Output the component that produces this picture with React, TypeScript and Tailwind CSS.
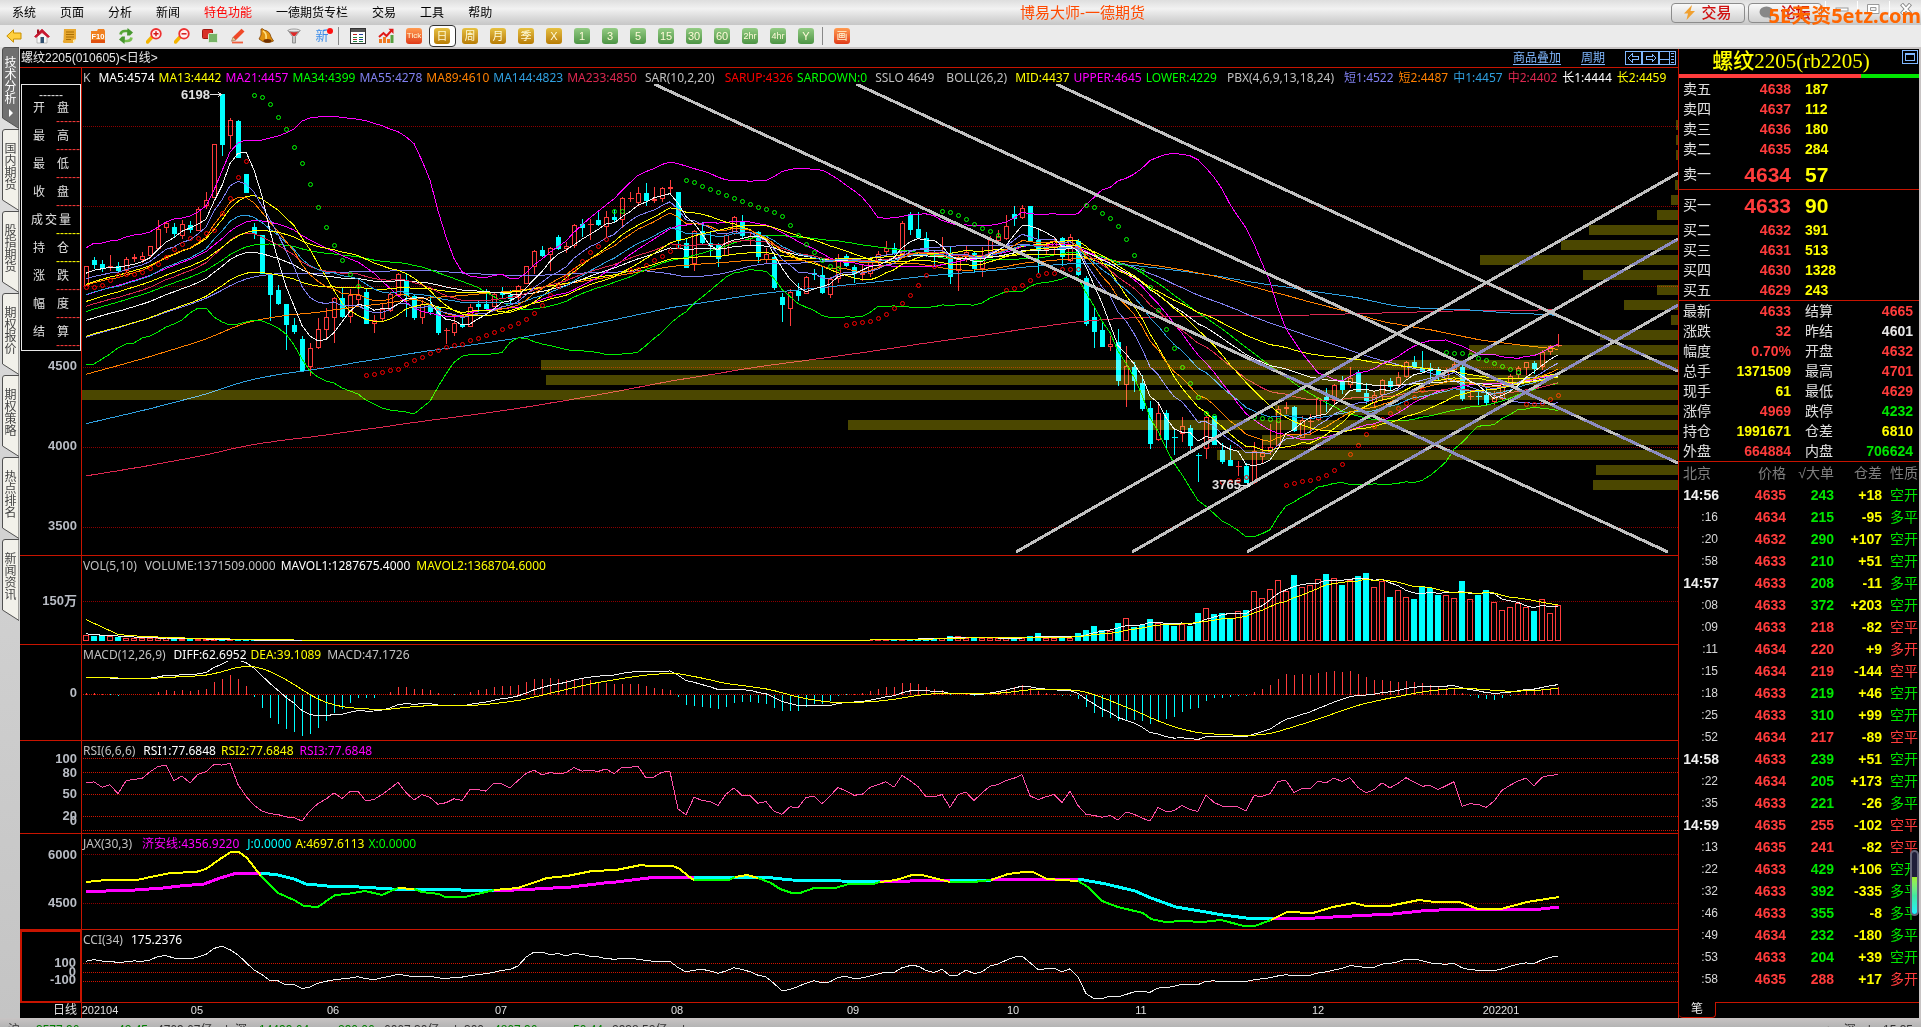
import type { ReactNode } from "react";

/* ------------------------------------------------------------------ */
/* Price data: colour, body top, body bottom, high, low (plot units)   */
/* ------------------------------------------------------------------ */

const CANDLE_TEXT = `r 266 286 266 286,c 260 265 257 269,c 264 268 260 272,r 266 268 255 271,c 266 271 262 273,r 259 271 257 273,r 257 259 254 262,r 256 260 252 263,r 246 256 246 258,r 229 249 220 250,
r 223 228 221 233,c 227 234 223 237,r 224 236 220 239,c 225 230 221 233,r 209 231 207 231,r 200 206 192 209,r 144 198 144 198,c 94 145 94 156,r 120 136 118 149,c 121 158 120 158,
c 174 193 174 193,c 227 234 223 239,c 235 274 235 274,c 274 295 274 321,c 290 304 285 305,c 304 325 304 350,c 325 332 318 334,c 339 371 336 372,r 348 367 343 376,r 329 348 318 349,
r 317 330 308 340,r 298 318 297 343,c 298 317 288 318,r 295 317 289 323,r 295 300 280 306,c 292 324 288 324,r 320 324 315 333,r 309 319 303 321,r 294 311 292 312,r 274 296 273 297,
c 280 296 273 317,c 296 318 294 320,r 304 318 300 324,c 305 312 295 315,c 307 333 306 335,r 330 331 328 344,r 323 333 317 336,c 325 327 317 328,r 307 327 304 327,c 304 307 301 312,
c 304 309 289 309,r 294 307 292 307,c 293 295 287 299,c 295 299 290 303,r 286 298 285 304,r 266 284 266 284,r 251 267 250 274,c 250 256 246 257,r 248 255 247 271,c 237 249 235 250,
r 246 249 242 253,r 225 246 224 248,c 224 228 219 237,r 224 225 219 240,c 220 225 212 226,r 217 227 211 237,c 217 220 210 223,r 198 220 197 228,r 198 199 192 202,r 193 203 187 204,
c 193 201 183 206,r 199 201 187 203,r 188 199 187 202,r 187 189 180 193,c 192 241 192 249,c 243 268 238 268,r 231 264 230 271,c 231 243 222 244,c 243 246 232 256,c 245 259 243 267,
r 235 256 233 256,r 217 234 216 235,c 221 236 215 238,r 236 239 232 246,c 232 257 231 263,r 254 260 248 263,c 257 288 255 290,c 297 305 293 322,r 292 309 289 326,c 291 296 283 301,
r 277 294 276 294,c 273 275 269 280,c 275 293 267 294,r 279 295 277 298,r 259 279 254 283,c 256 266 254 267,c 267 274 265 283,r 273 275 265 281,r 260 274 258 277,r 254 262 251 266,
r 248 252 241 255,c 248 254 243 255,r 223 254 221 255,c 214 230 212 235,c 229 238 212 239,c 238 255 232 257,c 252 255 250 266,r 252 253 237 258,c 253 277 247 284,r 257 271 255 291,
r 252 257 246 262,c 253 269 252 272,r 255 269 247 277,r 240 253 236 254,r 236 241 230 246,r 226 239 215 240,c 214 219 206 226,r 208 218 205 219,c 206 241 206 241,c 240 250 228 273,
r 245 250 242 255,r 241 247 237 254,c 238 257 237 266,r 237 261 234 262,c 241 275 239 276,c 278 324 276 326,c 317 332 307 348,c 330 347 322 347,r 344 347 336 351,c 342 381 329 386,
r 366 385 346 407,c 367 381 362 392,c 383 409 375 411,c 408 444 401 449,r 413 440 402 441,c 413 440 410 450,c 437 438 429 455,r 426 434 417 442,c 428 446 425 452,c 455 456 453 482,
r 417 449 416 459,c 416 445 416 445,c 450 462 443 464,c 460 466 445 466,r 466 467 461 476,c 466 483 463 483,r 451 483 442 484,r 453 457 440 464,r 447 452 424 455,r 409 446 406 446,
r 407 409 402 414,c 407 431 406 432,r 420 438 416 438,r 421 422 414 435,r 398 420 397 421,c 397 401 388 412,r 385 401 384 404,c 382 390 376 394,r 378 385 367 388,c 372 392 370 392,
c 393 401 383 404,r 395 403 392 407,r 380 395 379 401,c 381 387 378 390,r 377 385 372 388,r 362 377 361 378,c 362 367 356 368,c 368 372 351 373,c 368 371 363 383,c 369 375 367 380,
r 370 379 368 383,r 364 370 362 372,c 367 399 363 401,r 396 397 390 400,c 396 397 392 405,c 395 403 387 405,r 397 402 391 405,r 384 399 383 400,r 376 384 374 386,r 368 375 366 378,
r 362 368 362 375,c 363 369 361 374,r 352 367 350 370,r 346 352 345 355,r 345 346 334 347`;

type Candle = { up: boolean; top: number; bottom: number; high: number; low: number };

const candles: Candle[] = CANDLE_TEXT.split(",").map((entry) => {
  const [kind, top, bottom, high, low] = entry.trim().split(" ");
  return { up: kind === "r", top: +top, bottom: +bottom, high: +high, low: +low };
});

const HISTORY = 240;
const priorCloses = Array.from({ length: HISTORY }, (_, j) => {
  const k = HISTORY - j;
  return 268 + 2.8 * k - 0.0065 * k * k;
});
const closes = [...priorCloses, ...candles.map((c) => (c.up ? c.top : c.bottom))];
const typical = [
  ...priorCloses,
  ...candles.map((c) => ((c.up ? c.top : c.bottom) + c.high + c.low) / 3),
];

const visible = (series: number[]) => series.slice(HISTORY);
const xAt = (i: number) => 86 + 8 * i;
const toPoints = (ys: number[]) => ys.map((y, i) => `${xAt(i)},${Math.round(y * 10) / 10}`).join(" ");

function sma(data: number[], n: number) {
  return data.map((_, i) => {
    const from = Math.max(0, i - n + 1);
    let sum = 0;
    for (let j = from; j <= i; j++) sum += data[j];
    return sum / (i - from + 1);
  });
}

function ema(data: number[], n: number) {
  let last = data[0];
  return data.map((v) => (last = last + (2 / (n + 1)) * (v - last)));
}

function pbx(n: number) {
  const a = ema(closes, n);
  const b = sma(closes, 2 * n);
  const c = sma(closes, 4 * n);
  return a.map((v, i) => (v + b[i] + c[i]) / 3);
}

const MID = sma(closes, 26);
const deviation = closes.map((_, i) => {
  const from = Math.max(0, i - 25);
  const part = closes.slice(from, i + 1);
  return Math.sqrt(part.reduce((s, v) => s + (v - MID[i]) ** 2, 0) / part.length);
});
const UPPER_START = [
  248, 243, 243, 241, 240, 237, 235, 234, 232, 227, 222, 219, 218, 216, 212, 206, 190, 171, 152, 143, 140, 140, 140,
  138, 136, 133, 129, 121, 118, 117, 116, 116,
];
const LOWER_START = [
  364, 364, 359, 354, 348, 344, 343, 338, 336, 332, 327, 324, 320, 313, 308, 308, 317, 322, 325, 324, 322, 320, 321,
  324, 328, 334, 345, 359, 371, 377, 381, 383, 388, 391, 394, 400, 404, 408, 410, 411, 412, 414,
];
const upperBand = visible(MID.map((m, i) => m - 2 * deviation[i])).map((v, i) => UPPER_START[i] ?? v);
const lowerBand = visible(MID.map((m, i) => m + 2 * deviation[i])).map((v, i) => LOWER_START[i] ?? v);

const WHITE = "#f0f0f0";
const YELLOW = "#ffff00";
const MAGENTA = "#ff00ff";
const GREEN = "#00f000";
const VIOLET = "#8080f0";
const ORANGE = "#ff8000";
const BLUE = "#30a0e0";
const CRIMSON = "#dc2850";
const UP = "#ff3c3c";
const DOWN = "#00ffff";

const priceLines: [number[], string][] = [
  [sma(closes, 233), CRIMSON],
  [sma(closes, 144), BLUE],
  [sma(closes, 89), ORANGE],
  [sma(closes, 55), VIOLET],
  [sma(closes, 34), GREEN],
  [sma(closes, 21), MAGENTA],
  [sma(closes, 13), YELLOW],
  [pbx(24), YELLOW],
  [pbx(18), WHITE],
  [pbx(13), CRIMSON],
  [pbx(9), BLUE],
  [pbx(6), ORANGE],
  [pbx(4), VIOLET],
  [MID, YELLOW],
  [sma(closes, 5), WHITE],
];

/* Parabolic stop markers: first bar, rising flag, positions */
const stops: [number, boolean, number[]][] = [
  [0, true, [287, 287, 285, 280, 275, 274, 274, 272, 268, 264, 257, 249, 244, 238, 238, 233, 230, 213, 198, 177, 161]],
  [21, false, [95, 97, 104, 117, 129, 147, 163, 184, 207, 227, 245, 260, 274, 286]],
  [35, true, [375, 374, 372, 370, 369, 364, 360, 357, 353, 350, 347, 345, 344, 340, 338, 335, 332, 329, 326, 323, 319, 313, 305, 295, 286, 277, 270, 261, 252, 246, 239]],
  [66, false, [211, 211]],
  [68, true, [270, 269, 265, 260, 256, 251, 246]],
  [75, false, [180, 182, 186, 189, 192, 195, 198, 201, 204, 207, 209, 212, 216, 225, 235, 244, 252, 260, 266, 268]],
  [95, true, [325, 323, 322, 321, 318, 314, 308, 303, 295, 285, 275, 266]],
  [107, false, [211, 212, 215, 219, 224, 228, 231, 235]],
  [115, true, [290, 288, 285, 280, 275, 273, 273, 269, 269, 269]],
  [125, false, [205, 207, 213, 218, 226, 239, 255, 270, 287, 310, 329, 348, 367, 383, 397, 413, 416]],
  [142, true, [482, 481, 480, 477]],
  [146, false, [417, 418, 419, 420]],
  [150, true, [485, 483, 481, 480, 478, 475, 470, 464, 454, 445, 434, 426, 419, 413, 408, 403, 397, 390]],
  [170, false, [352, 353, 353, 355, 358, 360, 363, 366, 369, 372]],
  [180, true, [404, 404, 403, 399, 395]],
];

/* Volume-at-price bands: top, left edge */
const profile: [number, number][] = [
  [120, 1676], [135, 1676], [150, 1676], [180, 1675], [195, 1671], [210, 1657], [225, 1589], [240, 1561],
  [255, 1480], [270, 1583], [285, 1657], [300, 1624], [315, 1671], [330, 1600], [345, 1469], [360, 541],
  [375, 546], [390, 82], [405, 1275], [420, 848], [435, 1262], [450, 1217], [465, 1596], [480, 1593],
];

const trendLines: [number, number, number, number][] = [
  [654, 84, 1668, 552],
  [856, 84, 1678, 463],
  [1056, 84, 1678, 371],
  [1016, 552, 1678, 173],
  [1132, 552, 1678, 239],
  [1247, 552, 1678, 305],
];

/* Volume */
const volumeHead = [6, 5, 5, 5, 4, 3, 3, 3, 3, 3, 3, 2, 2, 2, 2, 2, 2];
const volumeTail = [
  3, 3, 3, 5, 5, 3, 3, 3, 3, 3, 3, 3, 3, 5, 8, 3, 3, 5, 3, 8, 11, 15, 11, 10, 18, 23, 14, 16, 22, 18, 18, 15, 17, 15,
  28, 33, 27, 28, 22, 30, 31, 50, 43, 52, 61, 50, 66, 54, 56, 62, 67, 63, 56, 61, 65, 68, 54, 60, 44, 51, 44, 42, 54,
  53, 46, 46, 43, 60, 42, 46, 51, 39, 31, 34, 38, 34, 30, 42, 28, 36,
];
const TAIL_START = 185 - volumeTail.length;
const volumes = candles.map((_, i) => volumeHead[i] ?? (i >= TAIL_START ? volumeTail[i - TAIL_START] : i > 98 ? 2 : 1));
const priorVolumes = Array.from({ length: 10 }, (_, j) => (j < 5 ? 42 : 15 - j));
const volumeAverage = (n: number) => sma([...priorVolumes, ...volumes], n).slice(10).map((v) => 641 - v);

/* MACD */
const fast = ema(closes, 12);
const slow = ema(closes, 26);
const diff = fast.map((v, i) => (v - slow[i]) * 0.92);
const dea = ema(diff, 9);
const ZERO = 694;
const diffLine = visible(diff).map((v) => ZERO + v);
const deaLine = visible(dea).map((v) => ZERO + v);
const histogram = visible(diff.map((v, i) => 2 * (v - dea[i])));

/* RSI */
const rsi = (() => {
  let gain = 4.4;
  let loss = 2.3;
  return candles.map((_, i) => {
    const change = i === 0 ? 0 : closes[HISTORY + i - 1] - closes[HISTORY + i];
    gain = (gain * 5 + Math.max(change, 0)) / 6;
    loss = (loss * 5 + Math.max(-change, 0)) / 6;
    return 830 - (gain / (gain + loss)) * 72;
  });
})();

/* CCI */
const typicalMean = sma(typical, 34);
const cci = visible(
  typical.map((v, i) => {
    const part = typical.slice(Math.max(0, i - 33), i + 1);
    const spread = part.reduce((s, t) => s + Math.abs(t - typicalMean[i]), 0) / part.length;
    return 972 - (0.09 * (typicalMean[i] - v)) / (0.015 * (spread || 1));
  }),
);

/* JAX: coloured runs of the two thick lines */
const jaxBase: [string, string][] = [
  [MAGENTA, "86,892 106,891 135,890 163,888 180,886 204,884 220,878 237,873 261,873"],
  [DOWN, "261,873 278,875 294,879 306,884 327,886 359,887 392,889 429,889 461,890 494,891"],
  [MAGENTA, "494,891 535,889 571,887 604,883 616,882 640,879 657,877 694,877"],
  [DOWN, "694,877 763,877 792,880 841,881 880,882"],
  [MAGENTA, "880,882 910,881 950,880"],
  [DOWN, "950,880 991,880"],
  [MAGENTA, "991,880 1020,879 1078,879"],
  [DOWN, "1078,879 1106,884 1135,891 1151,898 1176,907 1200,911 1223,915 1246,918 1273,918"],
  [MAGENTA, "1273,918 1315,918 1352,916 1393,914 1421,911 1458,909 1541,909 1559,907"],
];
const jaxFast: [string, string][] = [
  [YELLOW, "86,882 106,880 137,880 155,876 171,873 196,872 206,869 220,859 231,852 239,852 247,858 261,876"],
  ["#00ff00", "261,876 278,893 294,900 304,906 318,907 335,895 347,894 365,891 382,895 398,888"],
  [YELLOW, "398,888 414,889"],
  ["#00ff00", "414,889 422,892 439,894 445,897 465,897 494,890"],
  [YELLOW, "494,890 518,888 547,878 567,876 592,871 616,870 641,865 649,866 673,866 680,869 688,876 694,880"],
  ["#00ff00", "694,880 729,880 735,877"],
  [YELLOW, "735,877 747,875 758,878"],
  ["#00ff00", "758,878 771,883 780,889 792,893 800,893 814,888 835,888 849,884 873,884 880,882"],
  [YELLOW, "880,882 896,880 912,875 922,875 950,882"],
  ["#00ff00", "950,882 973,882 991,880"],
  [YELLOW, "991,880 1008,874 1024,872 1033,872 1047,879 1078,881"],
  ["#00ff00", "1078,881 1088,887 1102,901 1118,907 1143,913 1151,919 1165,922 1184,921 1202,922 1221,920 1244,926 1255,926 1271,920"],
  [YELLOW, "1271,920 1287,912 1313,913 1333,907 1354,903 1366,906 1389,906 1419,900 1435,902 1460,902 1478,909 1501,909 1527,902 1559,897"],
];

/* ------------------------------------------------------------------ */
/* Chart panels                                                        */
/* ------------------------------------------------------------------ */

type Tick = { label: string; at: number };

function Plot({ top, height, children }: { top: number; height: number; children: ReactNode }) {
  return (
    <svg
      className="min-h-0 w-full flex-1 **:[vector-effect:non-scaling-stroke]"
      viewBox={`82 ${top} 1596 ${height}`}
      preserveAspectRatio="none"
      shapeRendering="crispEdges"
      fill="none"
      aria-hidden="true"
    >
      {children}
    </svg>
  );
}

function Guides({ at, color }: { at: number[]; color: string }) {
  return (
    <g stroke={color} strokeDasharray="1 1">
      {at.map((y) => (
        <line key={y} x1={83} x2={1678} y1={y + 0.5} y2={y + 0.5} />
      ))}
    </g>
  );
}

function Panel(props: {
  size: string;
  top: number;
  height: number;
  ticks: Tick[];
  header: ReactNode;
  selected?: boolean;
  overlay?: ReactNode;
  children: ReactNode;
}) {
  const { size, top, height, ticks, header, selected, overlay, children } = props;
  return (
    <section className={`flex min-h-0 basis-0 border-b border-[#c81400] ${size}`}>
      <div className={`relative w-[62px] shrink-0 border-[#c81400] ${selected ? "border-2 border-b" : "border-r"}`}>
        {ticks.map((t) => (
          <span
            key={t.label}
            className="absolute right-1 -translate-y-1/2 text-[13px] leading-4 font-bold text-[#b8bcc4]"
            style={{ top: `${((t.at - top) / height) * 100}%` }}
          >
            {t.label}
          </span>
        ))}
        {overlay}
      </div>
      <div className="relative flex min-w-0 flex-1 flex-col">
        <header className="flex h-4 shrink-0 gap-1 overflow-visible pt-0.5 pl-px font-['Noto_Sans','Noto_Sans_CJK_SC',sans-serif] text-xs leading-4 whitespace-nowrap text-[#c0c0c0]">
          {header}
        </header>
        {children}
      </div>
    </section>
  );
}

function PricePanel() {
  return (
    <Panel
      size="grow-[487]"
      top={68}
      height={488}
      ticks={[
        { label: "4500", at: 367 },
        { label: "4000", at: 447 },
        { label: "3500", at: 527 },
      ]}
      overlay={<QuoteBox />}
      header={
        <>
          <span>K</span>
          <span className="ml-1 text-white">MA5:4574</span>
          <span className="text-[#ffff00]">MA13:4442</span>
          <span className="text-[#ff00ff]">MA21:4457</span>
          <span className="text-[#00ff00]">MA34:4399</span>
          <span className="text-[#8080f0]">MA55:4278</span>
          <span className="text-[#ff8000]">MA89:4610</span>
          <span className="text-[#30a0e0]">MA144:4823</span>
          <span className="text-[#dc2850]">MA233:4850</span>
          <span className="mr-1.5 ml-1">SAR(10,2,20)</span>
          <span className="text-[#ff0000]">SARUP:4326</span>
          <span className="text-[#00ff00]">SARDOWN:0</span>
          <span className="ml-1">SSLO 4649</span>
          <span className="mr-1 ml-2">BOLL(26,2)</span>
          <span className="text-[#ffff00]">MID:4437</span>
          <span className="text-[#ff00ff]">UPPER:4645</span>
          <span className="text-[#00ff00]">LOWER:4229</span>
          <span className="mr-1.5 ml-1.5">PBX(4,6,9,13,18,24)</span>
          <span className="mr-px text-[#8080f0]">短1:4522</span>
          <span className="mr-px text-[#ff8000]">短2:4487</span>
          <span className="mr-px text-[#30a0e0]">中1:4457</span>
          <span className="mr-px text-[#dc2850]">中2:4402</span>
          <span className="mr-px text-white">长1:4444</span>
          <span className="text-[#ffff00]">长2:4459</span>
        </>
      }
    >
      <Plot top={84} height={471}>
        <clipPath id="bands">
          {profile.map(([y, x]) => (
            <rect key={y} x={x} y={y} width={1678 - x} height={10} />
          ))}
        </clipPath>
        <Guides at={[126, 206, 286, 367, 447, 527]} color="#8c0000" />
        {candles.map((c, i) => {
          const x = xAt(i);
          const flat = c.bottom - c.top < 2;
          return (
            <g key={i} stroke={c.up ? UP : DOWN}>
              {c.high < c.top && <line x1={x + 0.5} x2={x + 0.5} y1={c.high} y2={c.top} />}
              {c.low > c.bottom && <line x1={x + 0.5} x2={x + 0.5} y1={c.bottom} y2={c.low} />}
              {flat ? (
                <line x1={x - 2} x2={x + 4} y1={c.top + 0.5} y2={c.top + 0.5} />
              ) : c.up ? (
                <rect x={x - 1.5} y={c.top + 0.5} width={4} height={c.bottom - c.top - 1} />
              ) : (
                <rect x={x - 2} y={c.top} width={5} height={c.bottom - c.top} fill={DOWN} stroke="none" />
              )}
            </g>
          );
        })}
        {priceLines.map(([series, color], i) => (
          <polyline key={i} points={toPoints(visible(series))} stroke={color} />
        ))}
        <polyline points={toPoints(upperBand)} stroke={MAGENTA} />
        <polyline points={toPoints(lowerBand)} stroke={GREEN} />
        {stops.map(([start, rising, ys]) => (
          <g key={start} stroke={rising ? "#ff0000" : "#00ff00"}>
            {ys.map((y, j) => (
              <rect key={j} x={xAt(start + j) - 1.5} y={y - 1.5} width={4} height={4} rx={2} shapeRendering="auto" />
            ))}
          </g>
        ))}
        <g fill="#4b4700" className="mix-blend-screen">
          {profile.map(([y, x]) => (
            <rect key={y} x={x} y={y} width={1678 - x} height={10} />
          ))}
        </g>
        <g stroke="#c0c0c0" strokeWidth={3}>
          {trendLines.map(([x1, y1, x2, y2]) => (
            <line key={`${x1}-${y1}`} x1={x1} y1={y1} x2={x2} y2={y2} />
          ))}
        </g>
        <g stroke="#8c8cc0" strokeWidth={3} clipPath="url(#bands)">
          {trendLines.map(([x1, y1, x2, y2]) => (
            <line key={`${x1}-${y1}`} x1={x1} y1={y1} x2={x2} y2={y2} />
          ))}
        </g>
        <path d="M210 94.5H221M218 92L221 94.5L218 97M1239 485.5H1250M1247 483L1250 485.5L1247 488" stroke="#e0e0e0" />
      </Plot>
      <span className="absolute top-[5.5%] left-[6.2%] -translate-y-1/2 text-[13px] leading-4 font-bold text-[#e0e0e0]">
        6198
      </span>
      <span className="absolute top-[85.6%] left-[70.8%] -translate-y-1/2 text-[13px] leading-4 font-bold text-[#e0e0e0]">
        3765
      </span>
    </Panel>
  );
}

const quoteRows: [string, string][] = [
  ["开盘", "text-[#ff3c3c]"],
  ["最高", "text-[#ff3c3c]"],
  ["最低", "text-[#ff3c3c]"],
  ["收盘", "text-[#ff3c3c]"],
  ["成交量", "text-[#ffff00]"],
  ["持仓", "text-[#ffff00]"],
  ["涨跌", "text-[#ff3c3c]"],
  ["幅度", "text-[#ff3c3c]"],
  ["结算", "text-[#ff3c3c]"],
];

function QuoteBox() {
  return (
    <div className="absolute top-4 left-px w-[60px] border border-[#e8e8e8] bg-black pt-1 text-xs text-[#e0e0e0]">
      <div className="text-center leading-3">------</div>
      <dl>
        {quoteRows.map(([name, tone]) => (
          <div key={name} className="h-7 last:h-[25px]">
            <dt className={`mx-auto flex justify-between leading-[14px] ${name.length > 2 ? "w-10" : "w-9"}`}>
              {[...name].map((ch) => (
                <span key={ch}>{ch}</span>
              ))}
            </dt>
            <dd className={`text-right leading-3 ${tone}`}>------</dd>
          </div>
        ))}
      </dl>
    </div>
  );
}

function VolumePanel() {
  return (
    <Panel
      size="grow-[88]"
      top={556}
      height={89}
      ticks={[{ label: "150万", at: 602 }]}
      header={
        <>
          <span className="mr-1">VOL(5,10)</span>
          <span>VOLUME:1371509.0000</span>
          <span className="ml-px text-white">MAVOL1:1287675.4000</span>
          <span className="ml-0.5 text-[#ffff00]">MAVOL2:1368704.6000</span>
        </>
      }
    >
      <Plot top={572} height={72}>
        <Guides at={[601]} color="#8c0000" />
        {candles.map((c, i) =>
          c.up && volumes[i] > 2 ? (
            <rect key={i} x={xAt(i) - 2.5} y={641.5 - volumes[i]} width={5} height={volumes[i] - 1} stroke={UP} />
          ) : (
            <rect key={i} x={xAt(i) - 3} y={641 - volumes[i]} width={6} height={volumes[i]} fill={c.up ? UP : DOWN} />
          ),
        )}
        <polyline points={toPoints(volumeAverage(5))} stroke={WHITE} />
        <polyline points={toPoints(volumeAverage(10))} stroke={YELLOW} />
      </Plot>
    </Panel>
  );
}

function MacdPanel() {
  return (
    <Panel
      size="grow-[95]"
      top={645}
      height={96}
      ticks={[{ label: "0", at: 694 }]}
      header={
        <>
          <span className="mr-1">MACD(12,26,9)</span>
          <span className="text-white">DIFF:62.6952</span>
          <span className="text-[#ffff00]">DEA:39.1089</span>
          <span className="ml-0.5">MACD:47.1726</span>
        </>
      }
    >
      <Plot top={661} height={79}>
        <Guides at={[694]} color="#d01400" />
        {histogram.map((v, i) => (
          <line key={i} x1={xAt(i) + 0.5} x2={xAt(i) + 0.5} y1={ZERO + 0.5} y2={ZERO + v} stroke={v < 0 ? UP : DOWN} />
        ))}
        <polyline points={toPoints(diffLine)} stroke={WHITE} />
        <polyline points={toPoints(deaLine)} stroke={YELLOW} />
      </Plot>
    </Panel>
  );
}

function RsiPanel() {
  return (
    <Panel
      size="grow-[92]"
      top={741}
      height={93}
      ticks={[
        { label: "100", at: 759 },
        { label: "80", at: 773 },
        { label: "50", at: 795 },
        { label: "20", at: 817 },
        { label: "0", at: 822 },
      ]}
      header={
        <>
          <span className="mr-1">RSI(6,6,6)</span>
          <span className="text-white">RSI1:77.6848</span>
          <span className="ml-px text-[#ffff00]">RSI2:77.6848</span>
          <span className="ml-0.5 text-[#ff00ff]">RSI3:77.6848</span>
        </>
      }
    >
      <Plot top={757} height={76}>
        <Guides at={[758, 772, 794, 816, 830]} color="#d01400" />
        <polyline points={toPoints(rsi)} stroke="#ff50a8" />
      </Plot>
    </Panel>
  );
}

function JaxPanel() {
  return (
    <Panel
      size="grow-[95]"
      top={834}
      height={96}
      ticks={[
        { label: "6000", at: 855 },
        { label: "4500", at: 904 },
      ]}
      header={
        <>
          <span className="mr-1.5">JAX(30,3)</span>
          <span className="mr-1 text-[#ff00ff]">济安线:4356.9220</span>
          <span className="text-[#00ffff]">J:0.0000</span>
          <span className="text-[#ffff00]">A:4697.6113</span>
          <span className="text-[#00ff00]">X:0.0000</span>
        </>
      }
    >
      <Plot top={850} height={79}>
        <Guides at={[854, 903]} color="#8c0000" />
        {jaxBase.map(([color, points]) => (
          <polyline key={points} points={points} stroke={color} strokeWidth={3} />
        ))}
        {jaxFast.map(([color, points]) => (
          <polyline key={points} points={points} stroke={color} strokeWidth={2} />
        ))}
      </Plot>
    </Panel>
  );
}

function CciPanel() {
  return (
    <Panel
      size="grow-[72]"
      top={930}
      height={73}
      selected
      ticks={[
        { label: "100", at: 963 },
        { label: "0", at: 972 },
        { label: "-100", at: 981 },
      ]}
      header={
        <>
          <span className="mr-1">CCI(34)</span>
          <span className="text-white">175.2376</span>
        </>
      }
    >
      <Plot top={946} height={56}>
        <Guides at={[963, 972, 981]} color="#d01400" />
        <polyline points={toPoints(cci)} stroke={WHITE} />
      </Plot>
    </Panel>
  );
}

const months: [string, number][] = [
  ["202104", 100], ["05", 197], ["06", 333], ["07", 501], ["08", 677],
  ["09", 853], ["10", 1013], ["11", 1141], ["12", 1318], ["202201", 1501],
];

function DateAxis() {
  return (
    <div className="flex h-[15px] shrink-0 leading-[15px] text-[#e0e0e0]">
      <div className="w-[62px] shrink-0 border-r border-[#c81400] pr-1 text-right text-xs leading-[15px]">日线</div>
      <div className="relative flex-1 text-[11px]">
        {months.map(([label, x]) => (
          <span
            key={label}
            className="absolute -translate-x-1/2"
            style={{ left: `${((x - 82) / 1596) * 100}%` }}
          >
            {label}
          </span>
        ))}
      </div>
    </div>
  );
}

/* ------------------------------------------------------------------ */
/* Title row of the chart                                              */
/* ------------------------------------------------------------------ */

function ChartTitle() {
  return (
    <div className="flex h-[19px] shrink-0 items-center border-b border-[#c81400] pl-px text-xs text-[#e8e8e8]">
      <h2>螺纹2205(010605)&lt;日线&gt;</h2>
      <div className="ml-auto flex items-center text-[#80b8ff]">
        <a href="#overlay" className="mr-5 underline underline-offset-2">商品叠加</a>
        <a href="#period" className="mr-5 underline underline-offset-2">周期</a>
        <button type="button" aria-label="向左">
          <svg width="17" height="14" fill="none" stroke="currentColor" shapeRendering="crispEdges">
            <path d="M.5.5H16V13.5H.5ZM3 7L7 3V5.5H13V8.5H7V11Z" />
          </svg>
        </button>
        <button type="button" aria-label="向右">
          <svg width="17" height="14" fill="none" stroke="currentColor" shapeRendering="crispEdges">
            <path d="M.5.5H16V13.5H.5ZM14 7L10 3V5.5H4V8.5H10V11Z" />
          </svg>
        </button>
        <button type="button" aria-label="布局" className="mr-0.5">
          <svg width="17" height="14" fill="none" stroke="currentColor" shapeRendering="crispEdges">
            <path d="M.5.5H16V13.5H.5ZM10.5 .5V13M.5 8.5H10" />
            <path d="M13.5 2V12" strokeWidth="3" strokeDasharray="1 2" />
          </svg>
        </button>
      </div>
    </div>
  );
}

/* ------------------------------------------------------------------ */
/* Menu bar and toolbar                                                */
/* ------------------------------------------------------------------ */

const menu = ["系统", "页面", "分析", "新闻", "特色功能", "一德期货专栏", "交易", "工具", "帮助"];

function MenuBar() {
  return (
    <div className="relative flex h-[25px] shrink-0 items-center bg-linear-to-b from-[#dedede] via-[#f2f2f2] via-35% to-[#c6c6c6] pl-3">
      <nav className="flex gap-6 text-xs text-black">
        {menu.map((m) => (
          <button key={m} type="button" className={m === "特色功能" ? "text-[#ff0000]" : ""}>
            {m}
          </button>
        ))}
      </nav>
      <h1 className="absolute left-[53.1%] text-[15px] leading-5 text-[#ff4a00]">博易大师-一德期货</h1>
      <div className="ml-auto flex items-center gap-[3px]">
        <button
          type="button"
          className="flex h-5 w-[74px] items-center justify-center gap-1.5 rounded-sm border border-[#8c8c8c] bg-linear-to-b from-[#fafafa] to-[#d0d0d0] text-[15px] leading-none font-medium text-[#d01010]"
        >
          <svg width="11" height="15" viewBox="0 0 11 15">
            <path d="M8 0L0 8.500H4L2.500 15L11 6H6.500Z" fill="#f0a030" />
          </svg>
          交易
        </button>
        <button
          type="button"
          className="flex h-5 w-[74px] items-center justify-center gap-1.5 rounded-sm border border-[#8c8c8c] bg-linear-to-b from-[#fafafa] to-[#d0d0d0] text-[15px] leading-none font-medium text-[#d01010]"
        >
          <svg width="15" height="14" viewBox="0 0 15 14" fill="#888">
            <ellipse cx="7.500" cy="6" rx="7" ry="5.500" />
            <path d="M8 10L12 14L12 9Z" />
          </svg>
          论坛
        </button>
        <div className="flex h-[25px] w-[96px] items-start pt-px text-[#8a8a8a]">
          <button type="button" aria-label="最小化" className="h-4 w-8 border-l border-white">
            <svg className="mx-auto" width="14" height="12"><rect x="1" y="5" width="12" height="3" fill="#fff" stroke="#999" /></svg>
          </button>
          <button type="button" aria-label="最大化" className="h-4 w-8 border-l border-white">
            <svg className="mx-auto" width="13" height="11" fill="#fff" stroke="#999"><path d="M.5.5H12V9.500H.5ZM3.500 3.500V6.500H9V3.500Z" fillRule="evenodd" /></svg>
          </button>
          <button type="button" aria-label="关闭" className="h-4 w-8 border-l border-white">
            <svg className="mx-auto" width="12" height="12" viewBox="0 0 12 12">
              <path d="M1.500 1L10.500 11M10.500 1L1.500 11" stroke="#888" strokeWidth="4" />
              <path d="M2 1.500L10 10.500M10 1.500L2 10.500" stroke="#fff" strokeWidth="2" />
            </svg>
          </button>
        </div>
      </div>
      <div className="absolute top-1 right-0 z-10 font-['Noto_Sans','Noto_Sans_CJK_SC',sans-serif] text-[20px] leading-6 font-bold whitespace-nowrap text-[#ff6600]">
        5E天资5etz.com
      </div>
    </div>
  );
}

function ToolButton({ label, selected, children }: { label: string; selected?: boolean; children: ReactNode }) {
  return (
    <button type="button" aria-label={label} className="flex h-[22px] w-7 items-center justify-center">
      <span
        className={
          selected
            ? "flex h-[22px] w-[27px] items-center justify-center rounded-sm border border-[#333] bg-white"
            : "flex size-4 items-center justify-center"
        }
      >
        {children}
      </span>
    </button>
  );
}

function Badge({ tone, children }: { tone: "gold" | "green" | "red"; children: ReactNode }) {
  const tones = {
    gold: "from-[#e6c040] to-[#b87c00]",
    green: "from-[#94cc84] to-[#4c9444]",
    red: "from-[#ff9a50] to-[#e03818]",
  };
  return (
    <span
      className={`flex size-4 items-center justify-center rounded-[3px] bg-linear-to-b text-[11px] leading-none whitespace-nowrap text-[#fffbd8] ${tones[tone]}`}
    >
      {children}
    </span>
  );
}

function Magnifier({ plus }: { plus: boolean }) {
  return (
    <svg width="16" height="16" viewBox="0 0 16 16">
      <path d="M6 9L1.500 14" stroke="#f4b400" strokeWidth="3.500" strokeLinecap="round" />
      <circle cx="10" cy="5.800" r="4.800" fill="#fff0f0" stroke="#ee3030" strokeWidth="1.800" />
      <path d={plus ? "M7.500 5.800H12.500M10 3.300V8.300" : "M7.500 5.800H12.500"} stroke="#d01818" strokeWidth="1.500" />
    </svg>
  );
}

function Toolbar() {
  return (
    <div className="flex h-6 shrink-0 items-start border-b-2 border-[#c8c4c4] bg-[#ebebeb]" role="toolbar">
      <ToolButton label="返回">
        <svg width="16" height="14" viewBox="0 0 16 14">
          <path d="M.8 7L7.500 .8V4H15V10H7.500V13.200Z" fill="#ffd040" stroke="#c89000" />
        </svg>
      </ToolButton>
      <ToolButton label="首页">
        <svg width="16" height="16" viewBox="0 0 16 16">
          <path d="M3 7L8 3L13 7V15H3Z" fill="#f6f6f6" stroke="#999" strokeWidth=".6" />
          <rect x="6.500" y="9" width="3.500" height="6" fill="#305070" />
          <path d="M.5 8.500L8 1.200L15.500 8.500L14 9.500L8 4.500L2 9.500Z" fill="#c81830" stroke="#c81830" strokeWidth=".8" />
          <rect x="3" y="1.500" width="2.200" height="4" fill="#a01020" />
        </svg>
      </ToolButton>
      <ToolButton label="公告">
        <svg width="16" height="16" viewBox="0 0 16 16">
          <path d="M2 1H14V11L11 15H2Q0 14 1.500 12Z" fill="#e8a830" />
          <path d="M4 4H12M4 6.500H12M4 9H12M4 11.500H9" stroke="#a06800" strokeWidth=".9" />
          <path d="M14 11L11 15V12Z" fill="#fff0b0" />
        </svg>
      </ToolButton>
      <ToolButton label="F10">
        <svg width="16" height="16" viewBox="0 0 16 16">
          <path d="M1 3H7L8 1H14L15 3V15H1Z" fill="#f08020" />
          <path d="M1 12H15V15H1Z" fill="#e05010" />
          <text x="8" y="11" textAnchor="middle" fontSize="7.500" fontWeight="bold" fill="#fff">F10</text>
        </svg>
      </ToolButton>
      <ToolButton label="刷新">
        <svg width="16" height="16" viewBox="0 0 16 16" fill="none" strokeWidth="2.600">
          <path d="M2.500 6.500Q3 3 7 3H11" stroke="#58a838" />
          <path d="M9.500 0L15 4.500L12 7.500H9Z" fill="#489830" />
          <path d="M13.500 9.500Q13 13 9 13H5" stroke="#78c050" />
          <path d="M6.500 16L1 11.500L4 8.500H7Z" fill="#489830" />
        </svg>
      </ToolButton>
      <ToolButton label="放大"><Magnifier plus /></ToolButton>
      <ToolButton label="缩小"><Magnifier plus={false} /></ToolButton>
      <ToolButton label="叠加">
        <svg width="16" height="16" viewBox="0 0 16 16">
          <rect x=".5" y="1.500" width="10" height="9" rx="1" fill="#d83028" stroke="#a01810" />
          <rect x="6.500" y="5.500" width="9" height="9" rx="1" fill="#78b468" stroke="#e0ecd8" />
        </svg>
      </ToolButton>
      <ToolButton label="画线">
        <svg width="16" height="16" viewBox="0 0 16 16">
          <path d="M3 9L11.500 .8L14.500 3.500L6 12Z" fill="#f04828" />
          <path d="M3 9L6 12L1.500 13.200Z" fill="#f0c890" stroke="#805030" strokeWidth=".5" />
          <path d="M2 14.500H13" stroke="#f06040" strokeWidth="1.800" />
        </svg>
      </ToolButton>
      <ToolButton label="预警">
        <svg width="16" height="16" viewBox="0 0 16 16">
          <path d="M3 1Q5 0 6 2Q12 3 13 9L15.500 13Q8 17 1 11Q4 8 3 1Z" fill="#e0900c" stroke="#804000" strokeWidth=".8" />
          <path d="M5 3Q9 5 8 11" stroke="#ffe080" strokeWidth="1.600" fill="none" />
          <ellipse cx="9.500" cy="12.800" rx="4" ry="1.800" fill="#703000" />
        </svg>
      </ToolButton>
      <ToolButton label="筛选">
        <svg width="16" height="16" viewBox="0 0 16 16">
          <path d="M2 2.500H14L9.500 8.500V15H6.500V8.500Z" fill="#c8c8c8" stroke="#808080" strokeWidth=".8" />
          <path d="M3.500 3.500H12.500L9 8H7Z" fill="#e02828" />
          <ellipse cx="8" cy="2.500" rx="6" ry="1.500" fill="#e8e8e8" stroke="#888" strokeWidth=".8" />
        </svg>
      </ToolButton>
      <ToolButton label="新">
        <span className="relative text-[13px] leading-4 text-[#3c8ce8]">
          新
          <span className="absolute top-0 -right-1 size-1.5 rounded-full bg-[#ff1010]" />
        </span>
      </ToolButton>
      <span className="flex h-[22px] w-2 items-center"><span className="ml-0.5 h-[18px] w-px bg-[#888]" /></span>
      <ToolButton label="报价表">
        <svg width="16" height="16" viewBox="0 0 16 16" shapeRendering="crispEdges">
          <rect x=".5" y=".5" width="15" height="15" fill="#fff" stroke="#333" />
          <rect x="1" y="1" width="14" height="3" fill="#555" />
          <path d="M3 6.500H7M3 11.500H7" stroke="#c02020" />
          <path d="M9 6.500H13M9 11.500H13" stroke="#2040a0" />
          <path d="M3 9.500H7M3 13.500H7M9 9.500H13M9 13.500H13" stroke="#208040" />
        </svg>
      </ToolButton>
      <ToolButton label="走势图">
        <svg width="16" height="16" viewBox="0 0 16 16">
          <path d="M2.500 15V11M6.500 15V9M10.500 15V11" stroke="#f07820" strokeWidth="3" />
          <path d="M14 15V7" stroke="#58a040" strokeWidth="3" />
          <path d="M1 9L5.500 5L8.500 8L14 2" stroke="#e01818" strokeWidth="2" fill="none" />
          <path d="M10.500 .8H15.500V6Z" fill="#e01818" />
        </svg>
      </ToolButton>
      <ToolButton label="Tick"><Badge tone="red"><span className="text-[8px]">Tick</span></Badge></ToolButton>
      <ToolButton label="日" selected><Badge tone="gold">日</Badge></ToolButton>
      {["周", "月", "季", "X"].map((t) => (
        <ToolButton key={t} label={t}><Badge tone="gold">{t}</Badge></ToolButton>
      ))}
      {["1", "3", "5", "15", "30", "60"].map((t) => (
        <ToolButton key={t} label={`${t}分钟`}><Badge tone="green">{t}</Badge></ToolButton>
      ))}
      {["2hr", "4hr"].map((t) => (
        <ToolButton key={t} label={t}><Badge tone="green"><span className="text-[9px]">{t}</span></Badge></ToolButton>
      ))}
      <ToolButton label="年"><Badge tone="green">Y</Badge></ToolButton>
      <span className="flex h-[22px] w-2 items-center"><span className="ml-0.5 h-[18px] w-px bg-[#888]" /></span>
      <ToolButton label="画"><Badge tone="red">画</Badge></ToolButton>
    </div>
  );
}

/* ------------------------------------------------------------------ */
/* Left tab strip                                                      */
/* ------------------------------------------------------------------ */

const sideTabs = ["技术分析", "国内期货", "股指期货", "期权报价", "期权策略", "热点排名", "新闻资讯"];

function SideTabs() {
  return (
    <nav className="-mt-0.5 w-5 shrink-0 bg-linear-to-b from-[#e0e0e0] to-[#c4c4c4] pl-0.5">
      {sideTabs.map((name, i) => (
        <button
          key={name}
          type="button"
          className={`relative block h-[82px] w-[17px] text-xs ${i === 0 ? "text-white" : "text-[#444]"}`}
        >
          <svg className="absolute inset-0" width="17" height="82" viewBox="0 0 17 82">
            <path
              d="M17 .5H3Q.5 .5 .5 3V71L17 81.500Z"
              fill={i === 0 ? "#707070" : "#f2f1ea"}
              stroke="#505050"
            />
          </svg>
          <span className={`absolute inset-x-0 flex flex-col items-center leading-3 ${i === 0 ? "top-2.5" : "top-3.5"}`}>
            {[...name].map((ch, j) => (
              <span key={j}>{ch}</span>
            ))}
            {i === 0 && (
              <svg className="mt-1" width="4" height="8" viewBox="0 0 4 8"><path d="M0 0L4 4L0 8Z" fill="#fff" /></svg>
            )}
          </span>
        </button>
      ))}
    </nav>
  );
}

/* ------------------------------------------------------------------ */
/* Quote panel on the right                                            */
/* ------------------------------------------------------------------ */

const asks: [string, string, string][] = [
  ["卖五", "4638", "187"], ["卖四", "4637", "112"], ["卖三", "4636", "180"], ["卖二", "4635", "284"], ["卖一", "4634", "57"],
];
const bids: [string, string, string][] = [
  ["买一", "4633", "90"], ["买二", "4632", "391"], ["买三", "4631", "513"], ["买四", "4630", "1328"], ["买五", "4629", "243"],
];

const RED = "text-[#ff3c3c]";
const LIME = "text-[#00e600]";
const GOLD = "text-[#ffff00]";
const PALE = "text-[#e8e8e8]";

const facts: [string, string, string, string, string, string][] = [
  ["最新", "4633", RED, "结算", "4665", RED],
  ["涨跌", "32", RED, "昨结", "4601", PALE],
  ["幅度", "0.70%", RED, "开盘", "4632", RED],
  ["总手", "1371509", GOLD, "最高", "4701", RED],
  ["现手", "61", GOLD, "最低", "4629", RED],
  ["涨停", "4969", RED, "跌停", "4232", LIME],
  ["持仓", "1991671", GOLD, "仓差", "6810", GOLD],
  ["外盘", "664884", RED, "内盘", "706624", LIME],
];

const trades: [string, string, string, string, string][] = [
  ["14:56", "4635", "243", "+18", "空开"], [":16", "4634", "215", "-95", "多平"], [":20", "4632", "290", "+107", "空开"],
  [":58", "4633", "210", "+51", "空开"], ["14:57", "4633", "208", "-11", "多平"], [":08", "4633", "372", "+203", "空开"],
  [":09", "4633", "218", "-82", "空平"], [":11", "4634", "220", "+9", "多开"], [":15", "4634", "219", "-144", "空平"],
  [":18", "4633", "219", "+46", "空开"], [":25", "4633", "310", "+99", "空开"], [":52", "4634", "217", "-89", "空平"],
  ["14:58", "4633", "239", "+51", "空开"], [":22", "4634", "205", "+173", "空开"], [":35", "4633", "221", "-26", "多平"],
  ["14:59", "4635", "255", "-102", "空平"], [":13", "4635", "241", "-82", "空平"], [":22", "4633", "429", "+106", "空开"],
  [":32", "4633", "392", "-335", "多平"], [":46", "4633", "355", "-8", "多平"], [":49", "4634", "232", "-180", "多平"],
  [":53", "4633", "204", "+39", "空开"], [":58", "4635", "288", "+17", "多开"],
];

function Book({ rows, label }: { rows: [string, string, string][]; label: string }) {
  return (
    <div className="shrink-0 border-b border-[#c81400]">
      <table className="w-full table-fixed" aria-label={label}>
        <tbody>
          {rows.map(([name, price, volume]) => {
            const best = name.endsWith("一");
            return (
              <tr key={name} className={best ? "h-[30px]" : "h-5"}>
                <th scope="row" className="w-12 pl-1 text-left font-normal text-[#e0e0e0]">{name}</th>
                <td className={`w-16 text-right font-bold text-[#ff3c3c] ${best ? "text-[21px] leading-none" : ""}`}>{price}</td>
                <td className={`pl-3.5 font-bold text-[#ffff00] ${best ? "text-[21px] leading-none" : ""}`}>{volume}</td>
              </tr>
            );
          })}
        </tbody>
      </table>
    </div>
  );
}

function QuotePanel() {
  return (
    <aside className="relative mr-[2px] flex w-[241px] shrink-0 flex-col overflow-hidden border-l border-[#c81400] bg-black text-sm leading-none">
      <div className="relative h-[25px] shrink-0 text-center">
        <h2 className="pr-4 font-['Liberation_Serif','Noto_Sans_CJK_SC',serif] text-[21px] leading-6 font-medium text-[#ffff00]">
          螺纹2205(rb2205)
        </h2>
        <button type="button" aria-label="窗口" className="absolute top-px right-px">
          <svg width="16" height="14" fill="none" stroke="#80b8ff" shapeRendering="crispEdges">
            <path d="M.5.5H15V13.500H.5ZM3.500 3.500H12V10.500H3.500ZM3.500 4.500H12" />
          </svg>
        </button>
      </div>
      <div className="mb-px flex h-1 shrink-0">
        <div className="grow-[181] bg-[#ff3c3c]" />
        <div className="grow-[58] bg-[#00e600]" />
      </div>
      <Book rows={asks} label="卖盘" />
      <Book rows={bids} label="买盘" />
      <div className="shrink-0 border-b border-[#c81400]">
        <table className="w-full table-fixed">
          <tbody>
            {facts.map(([a, av, ac, b, bv, bc]) => (
              <tr key={a} className="h-5">
                <th scope="row" className="w-12 pl-1 text-left font-normal text-[#e0e0e0]">{a}</th>
                <td className={`w-16 font-bold ${ac}`}><div className="flex justify-end">{av}</div></td>
                <th scope="row" className="w-[60px] pl-3.5 text-left font-normal text-[#e0e0e0]">{b}</th>
                <td className={`pr-1.5 text-right font-bold ${bc}`}>{bv}</td>
              </tr>
            ))}
          </tbody>
        </table>
      </div>
      <table className="w-full table-fixed whitespace-nowrap">
        <thead>
          <tr className="h-[22px] text-[#808080]">
            <th scope="col" className="w-[41px] pl-1 text-left font-normal">北京</th>
            <th scope="col" className="w-[66px] text-right font-normal">价格</th>
            <th scope="col" className="w-12 text-right font-normal">√大单</th>
            <th scope="col" className="w-12 text-right font-normal">仓差</th>
            <th scope="col" className="pr-px text-right font-normal">性质</th>
          </tr>
        </thead>
        <tbody>
          {trades.map(([time, price, volume, change, kind], i) => {
            const minute = !time.startsWith(":");
            const tone = kind === "空平" || kind === "多开" ? "text-[#ff3c3c]" : "text-[#00e600]";
            return (
              <tr key={i} className="h-[22px] text-right font-bold">
                <td className={minute ? "pr-px text-[#f0f0f0]" : "pr-0.5 text-xs font-normal text-[#d8d8d8]"}>{time}</td>
                <td className="text-[#ff3c3c]">{price}</td>
                <td className={tone}>{volume}</td>
                <td className="text-[#ffff00]">{change}</td>
                <td className={`pr-px font-normal ${tone}`}>{kind}</td>
              </tr>
            );
          })}
        </tbody>
      </table>
      <div className="mt-auto flex h-4 shrink-0">
        <button type="button" className="w-[37px] rounded-b-sm border-r border-b border-[#c81400] text-xs leading-[15px] text-[#e8e8e8]">
          笔
        </button>
        <div className="flex-1 border-t border-[#c81400]" />
      </div>
      <div className="absolute right-0 bottom-[102px] flex h-[66px] w-[9px] flex-col justify-end rounded-full border-2 border-[#66667a] bg-[#1f1d38]">
        <div className="h-[37px] rounded-b-full bg-linear-to-b from-[#a0f020] via-[#40e8a0] to-[#20f0ff]" />
      </div>
    </aside>
  );
}

/* ------------------------------------------------------------------ */
/* Status bar                                                          */
/* ------------------------------------------------------------------ */

function StatusBar() {
  return (
    <footer className="flex h-[9px] shrink-0 overflow-hidden bg-linear-to-b from-[#c8c4c4] to-[#b4b4b4] px-2 pt-1 text-xs leading-4 whitespace-nowrap text-[#333]">
      <span>沪</span>
      <span className="ml-4 w-[78px] text-[#008000]">3577.96</span>
      <span className="w-[43px] text-[#008000]">-42.45</span>
      <span className="w-[68px]">4769.67亿</span>
      <span className="w-2.5">|</span>
      <span className="w-6">深</span>
      <span className="w-[75px] text-[#008000]">14499.64</span>
      <span className="w-[50px] text-[#008000]">-290.06</span>
      <span className="w-[70px]">6067.30亿</span>
      <span className="w-2.5">|</span>
      <span className="w-[30px]">300</span>
      <span className="w-[75px] text-[#008000]">4867.96</span>
      <span className="w-[43px] text-[#008000]">-50.44</span>
      <span className="w-[70px]">2938.52亿</span>
      <span>|</span>
      <span className="ml-auto flex gap-3">
        <span>+</span>
        <span>深</span>
        <span>|</span>
        <span>15:35</span>
      </span>
    </footer>
  );
}

export default function App() {
  return (
    <div className="flex h-screen min-w-[1200px] flex-col overflow-hidden bg-[#c8c4c4] font-['Liberation_Sans','Noto_Sans_CJK_SC',sans-serif]">
      <MenuBar />
      <Toolbar />
      <div className="flex min-h-0 flex-1">
        <SideTabs />
        <main className="flex min-w-0 flex-1 flex-col bg-black">
          <ChartTitle />
          <PricePanel />
          <VolumePanel />
          <MacdPanel />
          <RsiPanel />
          <JaxPanel />
          <CciPanel />
          <DateAxis />
        </main>
        <QuotePanel />
      </div>
      <StatusBar />
    </div>
  );
}
